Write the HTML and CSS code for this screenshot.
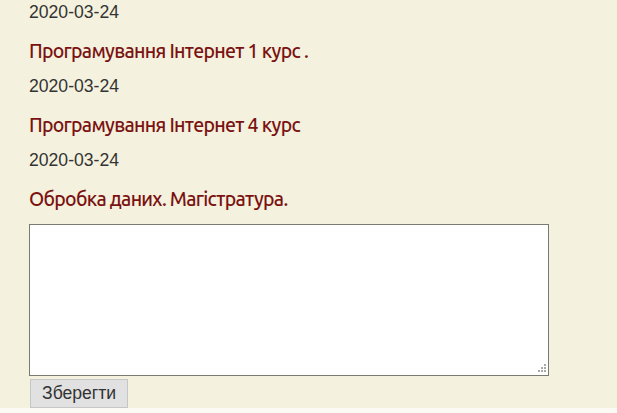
FILE: index.html
```html
<!DOCTYPE html>
<html lang="uk">
<head>
<meta charset="utf-8"/>
<meta content="width=device-width, initial-scale=1.0" name="viewport"/>
<title>Новини</title>
<link rel="stylesheet" href="styles.css">
</head>
<body>
<div class="news">
  <div class="date">2020-03-24</div>
  <h3 class="title">Програмування Інтернет 1 курс .</h3>
  <div class="date">2020-03-24</div>
  <h3 class="title">Програмування Інтернет 4 курс</h3>
  <div class="date">2020-03-24</div>
  <h3 class="title">Обробка даних. Магістратура.</h3>
</div>
<form class="note-form">
  <div class="note-wrap">
    <textarea class="note" name="note"></textarea>
    <svg class="grip" width="8" height="8" viewBox="0 0 8 8">
      <rect x="6" y="0" width="2" height="2"/>
      <rect x="3" y="3" width="2" height="2"/><rect x="6" y="3" width="2" height="2"/>
      <rect x="0" y="6" width="2" height="2"/><rect x="3" y="6" width="2" height="2"/><rect x="6" y="6" width="2" height="2"/>
    </svg>
  </div>
  <button class="save" type="button">Зберегти</button>
</form>
<div class="footer-strip"></div>
</body>
</html>
```

FILE: styles.css
```css
body { margin: 0; background: #f4f2de; font-family: "Liberation Sans", Arial, sans-serif; color: #333; }
.news { padding: 2px 0 0 29px; }
.date { font-size: 17.6px; line-height: 20px; color: #333; margin: 0; }
.title {
  font-family: "Ubuntu", "Open Sans", sans-serif;
  font-weight: 500;
  font-size: 19.5px;
  letter-spacing: -0.72px;
  line-height: 24px;
  color: #7b1212;
  margin: 17px 0 13px;
}
.note-form { padding-left: 29px; display: flex; flex-direction: column; align-items: flex-start; }
.note-wrap { position: relative; display: flex; }
.note { width: 514px; height: 146px; border: 1px solid #7a7a72; background: #fff; margin: 0; padding: 2px; resize: none; }
.grip { position: absolute; right: 3px; bottom: 4px; fill: #a9a9a9; }
.save {
  margin: 3px 0 0 1px;
  height: 29px;
  padding: 0 11px;
  font-family: "Liberation Sans", Arial, sans-serif;
  font-size: 17.6px;
  color: #333;
  background: #e1e1e1;
  border: 1px solid #c6c6c6;
}
.footer-strip { height: 10px; background: #fbfaf4; }
```
